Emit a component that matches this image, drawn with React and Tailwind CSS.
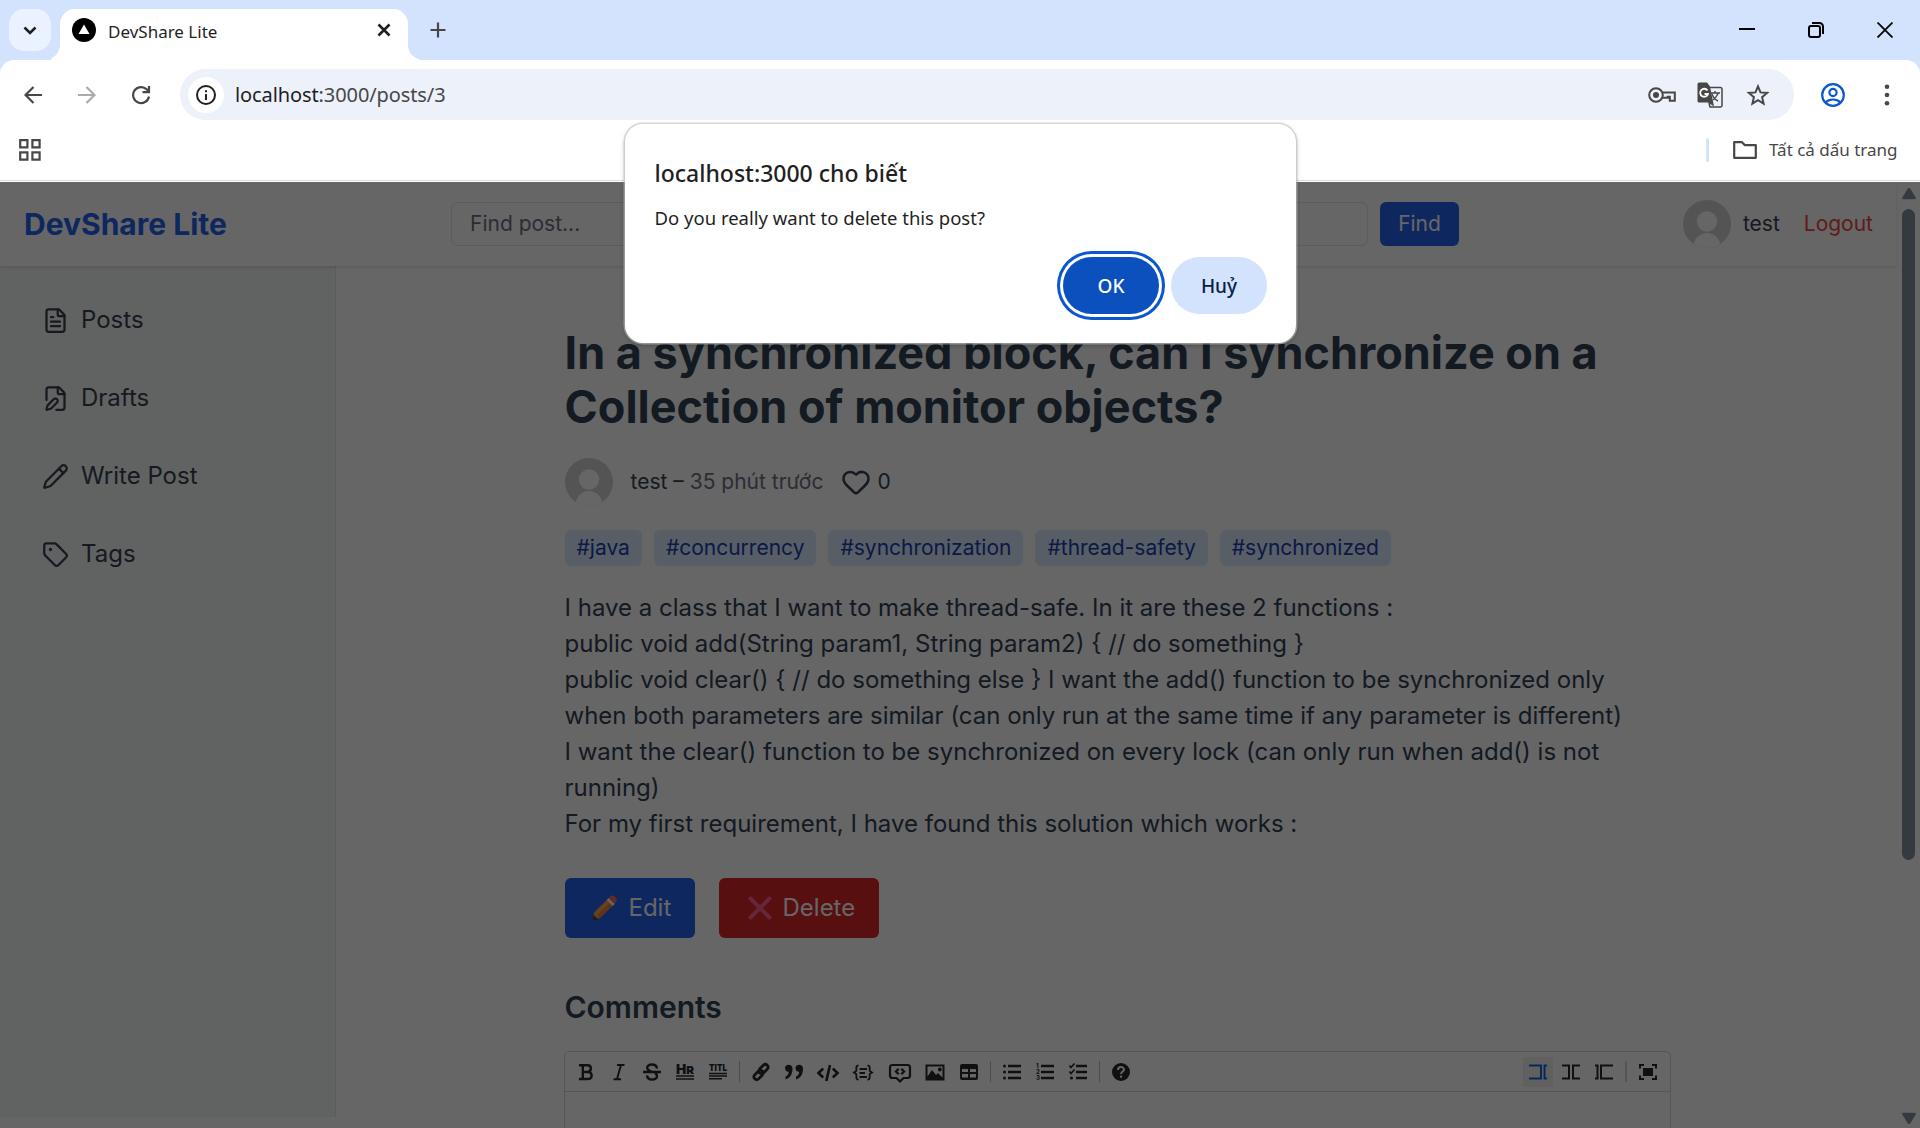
import React from "react";
import { FileText, FilePen, Pencil, Tag, Heart } from "lucide-react";

const SEG = "font-['Noto_Sans',sans-serif]";

function Avatar({ className }) {
  return (
    <svg viewBox="0 0 48 48" className={className}>
      <defs>
        <clipPath id="face"><circle cx="24" cy="24" r="24" /></clipPath>
      </defs>
      <g clipPath="url(#face)">
        <rect width="48" height="48" fill="#d1d1d1" />
        <circle cx="24" cy="21.500" r="10.200" fill="#fff" />
        <ellipse cx="24" cy="47" rx="13.500" ry="14" fill="#fff" />
      </g>
    </svg>
  );
}

function TabStrip() {
  return (
    <div className="flex h-[60px] items-start bg-[#d3e3fd] pt-[9px]">
      <div className="ml-[9px] flex h-[42px] w-[42px] items-center justify-center rounded-[15px] bg-[#ebf2ff]">
        <svg width="14" height="9" viewBox="0 0 14 9" fill="none" stroke="#1f1f1f" strokeWidth="2.600"><path d="M1.500 1.500 7 7l5.500-5.500" /></svg>
      </div>
      <svg className="mt-[36px] h-[15px] w-[9px]" viewBox="0 0 9 15" fill="#fff"><path d="M9 0v15H-6C2 15 9 8 9 0Z" /></svg>
      <div className="flex h-[51px] w-[348px] items-center rounded-t-[15px] bg-white pr-[17px] pl-3">
        <svg width="24" height="24" viewBox="0 0 24 24" className="-mt-[9px]"><circle cx="12" cy="12" r="12" fill="#000" /><path d="M12 6.500 17.500 16h-11Z" fill="#fff" /></svg>
        <span className="ml-3 -mt-[5px] w-[130px] text-[17px] leading-6 whitespace-nowrap text-[#1f1f1f]">DevShare Lite</span>
        <svg width="14" height="14" viewBox="0 0 14 14" className="-mt-[9px] ml-auto" stroke="#1f1f1f" strokeWidth="2.600"><path d="m1.500 1.500 11 11m0-11-11 11" /></svg>
      </div>
      <svg className="mt-[36px] h-[15px] w-[15px]" viewBox="0 0 15 15" fill="#fff"><path d="M0 0v15h15C7 15 0 8 0 0Z" /></svg>
      <svg width="16" height="16" viewBox="0 0 16 16" className="mt-[13px] ml-[7px]" stroke="#474747" strokeWidth="2.200"><path d="M8 .5v15M.5 8h15" /></svg>
      <div className="mt-[13px] mr-[27px] ml-auto flex items-center gap-[53px]">
        <svg width="16" height="16" viewBox="0 0 16 16" stroke="#000" strokeWidth="2"><path d="M0 7h16" /></svg>
        <svg width="16" height="16" viewBox="0 0 16 16" fill="none" stroke="#000" strokeWidth="2"><rect x="1" y="4" width="11" height="11" rx="2" /><path d="M4 1h7.500A3.500 3.500 0 0 1 15 4.500V12" /></svg>
        <svg width="16" height="16" viewBox="0 0 16 16" stroke="#000" strokeWidth="1.800"><path d="m.5.500 15 15m0-15-15 15" /></svg>
      </div>
    </div>
  );
}

function Toolbar() {
  return (
    <div className="bg-[#d3e3fd]">
      <div className="flex h-[69px] items-center rounded-t-[14px] bg-white">
        <svg width="18" height="18" viewBox="0 0 18 18" className="ml-6" fill="none" stroke="#474747" strokeWidth="2.200"><path d="M9.500 1 1.500 9l8 8M1.500 9H18" /></svg>
        <svg width="18" height="18" viewBox="0 0 18 18" className="ml-9" fill="none" stroke="#ababab" strokeWidth="2.200"><path d="m8.500 1 8 8-8 8M16.500 9H0" /></svg>
        <svg width="20" height="20" viewBox="0 0 20 20" className="ml-[35px]" fill="none" stroke="#474747" strokeWidth="2.200"><path d="M18 11.500A8 8 0 1 1 15.700 4.300L18 6.700M18 1v6.200h-6.500" /></svg>
        <div className="ml-[29px] flex h-[51px] w-[1614px] items-center rounded-full bg-[#edf1fa] pr-[23px] pl-2">
          <div className="flex h-9 w-9 items-center justify-center rounded-full bg-white">
            <svg width="20" height="20" viewBox="0 0 20 20" fill="none" stroke="#1f1f1f" strokeWidth="2"><circle cx="10" cy="10" r="9" /><path d="M10 9v6M10 5.200v2" /></svg>
          </div>
          <span className="ml-[11px] text-[20px] tracking-[-0.1px] text-[#1f1f1f]">localhost<span className="text-[#474747]">:3000/posts/3</span></span>
          <svg width="28" height="18" viewBox="0 0 28 18" className="ml-auto" fill="none" stroke="#474747" strokeWidth="2"><circle cx="8" cy="9" r="6.800" /><circle cx="8" cy="9" r="3" fill="#474747" stroke="none" /><path d="M14 6.500h12.800v8.300h-5v-4h-2v1H14" /></svg>
          <svg width="26" height="26" viewBox="0 0 26 26" className="ml-[21px]"><path d="M2 .5h8l3 4 4 20-6-4H2a1.500 1.500 0 0 1-1.500-1.500V2A1.500 1.500 0 0 1 2 .5Z" fill="#474747" /><path d="M12 5.500h11.500a1.500 1.500 0 0 1 1.500 1.500v16.500a1.500 1.500 0 0 1-1.500 1.500H13l-1-4" fill="none" stroke="#474747" strokeWidth="1.500" /><path d="M10.500 8.500A4 4 0 1 0 11 12H7.500" fill="none" stroke="#fff" strokeWidth="1.800" /><path d="M14 11h9m-5-2v2m3 0c-.5 3-3 5-5 7m-1-6c1 3 4 6 6 7" fill="none" stroke="#474747" strokeWidth="1.400" /></svg>
          <svg width="24" height="24" viewBox="0 0 24 24" className="mr-px ml-[23px]" fill="none" stroke="#474747" strokeWidth="2"><path d="m12 3.400 2.500 6 6.600.5-5 4.300 1.500 6.400-5.600-3.400-5.600 3.400 1.500-6.400-5-4.300 6.600-.5Z" /></svg>
        </div>
        <svg width="24" height="24" viewBox="0 0 24 24" className="ml-[27px]" fill="none" stroke="#0b57d0" strokeWidth="2.200"><circle cx="12" cy="12" r="10.800" /><circle cx="12" cy="9.500" r="3.600" /><path d="M4.500 19.500c4-4 11-4 15 0" /></svg>
        <svg width="6" height="22" viewBox="0 0 6 22" className="ml-[39px]" fill="#474747"><circle cx="3" cy="2.700" r="2.300" /><circle cx="3" cy="11" r="2.300" /><circle cx="3" cy="19.300" r="2.300" /></svg>
      </div>
    </div>
  );
}

function BookmarkBar() {
  return (
    <div className="h-[53px] shrink-0 bg-white">
      <div className="flex h-[52px] items-center border-b border-[#dcdcdc] pr-[22px] pb-[9px] pl-[19px]">
        <svg width="22" height="22" viewBox="0 0 22 22" fill="none" stroke="#474747" strokeWidth="2.200"><path d="M1.200 1.200h7.200v7.200H1.200ZM13.400 1.200h7.200v7.200h-7.200ZM1.200 13.400h7.200v7.200H1.200ZM13.400 13.400h7.200v7.200h-7.200Z" /></svg>
        <div className="ml-auto h-6 w-[3px] rounded-full bg-[#d3e3fd]" />
        <svg width="24" height="18" viewBox="0 0 24 18" className="ml-6" fill="none" stroke="#474747" strokeWidth="2.200" strokeLinejoin="round"><path d="M1.200 1.200h7.800l2.700 2.900h11.100v12.700H1.200Z" /></svg>
        <span className="ml-3 w-[129px] text-[17px] whitespace-nowrap text-[#474747]">Tất cả dấu trang</span>
      </div>
    </div>
  );
}

function Header() {
  return (
    <header className="relative z-10 flex h-[84px] w-[1896px] items-center bg-white pr-[23px] pl-6 shadow-[0_1.5px_3px_rgba(0,0,0,0.12)]">
      <div className="w-[427px] text-[30px] leading-9 font-bold text-[#2563eb]">DevShare Lite</div>
      <div className="flex h-11 w-[917px] items-center rounded-[6px] border border-gray-200 px-[18px] text-[21px] text-gray-500">Find post...</div>
      <div className="ml-3 flex h-11 w-[79px] items-center justify-center rounded-[6px] bg-[#2563eb] text-[21px] text-white">Find</div>
      <Avatar className="ml-auto h-12 w-12" />
      <span className="ml-3 text-[21px] text-[#374151]">test</span>
      <span className="ml-6 text-[21px] text-[#ef4444]">Logout</span>
    </header>
  );
}

const NAV = [[FileText, "Posts"], [FilePen, "Drafts"], [Pencil, "Write Post"], [Tag, "Tags"]];

function Sidebar() {
  return (
    <aside className="h-[851px] w-[336px] border-r border-gray-200 bg-[#f0f8f4] pt-[28px] pl-[42px]">
      {NAV.map(([Icon, label]) => (
        <div key={label} className="mb-[26px] flex h-[52px] items-center gap-3 text-[24px] text-[#374151]">
          <Icon size={27} strokeWidth={2} />
          {label}
        </div>
      ))}
    </aside>
  );
}

const TAGS = ["java", "concurrency", "synchronization", "thread-safety", "synchronized"];

const LINES = [
  "I have a class that I want to make thread-safe. In it are these 2 functions :",
  "public void add(String param1, String param2) { // do something }",
  "public void clear() { // do something else } I want the add() function to be synchronized only",
  "when both parameters are similar (can only run at the same time if any parameter is different)",
  "I want the clear() function to be synchronized on every lock (can only run when add() is not",
  "running)",
  "For my first requirement, I have found this solution which works :",
];

function PencilEmoji() {
  return (
    <svg width="26" height="26" viewBox="0 0 26 26">
      <path d="M2 17.500 15.500 4.500l5.500 5.500L8 23l-6.500 1.500Z" fill="#ffa347" />
      <path d="M5 20.500 18.300 7.300 21 10 8 23Z" fill="#e8823a" />
      <path d="m14.700 5 2.300-2.300 6 6L20.700 11Z" fill="#fff" />
      <path d="m16.500 3.200 2-1.900c1.500-1.300 3-1 4.500.5l.7.700c1.300 1.300 1.500 3 .2 4.300L22 8.700Z" fill="#ff6a5c" />
      <path d="m1.600 20-.9 4.300c0 .7.400 1 1 .9L6 24Z" fill="#5a3b3f" />
    </svg>
  );
}

const TOOLS = [
  ["bold", 33, <g fill="none" stroke="currentColor" strokeWidth="2.400"><path d="M2 2.300h8.500c4.500 0 4.500 6.500 0 6.700H5.800M10.500 9c5.500 0 5.500 7 0 7H2M5.800 2v14" /></g>],
  ["italic", 33, <g fill="none" stroke="currentColor" strokeWidth="1.900"><path d="M7 2h7.500M3.500 16.200H11M11 2 7 16" /></g>],
  ["strike", 33, <g fill="none" stroke="currentColor" strokeWidth="2.400"><path d="M0 9h18M14 5.500c-.5-5.500-9.800-5-9.800-.8 0 2.300 2 3.200 4.800 4.100M4 12.300c.5 5.700 10 5.200 10 .9 0-1.500-.6-2.500-2-3.300" /></g>],
  ["hr", 33, <g><text x="0" y="10.500" textLength="18" lengthAdjust="spacingAndGlyphs" className="text-[13px] font-black" fill="currentColor">H<tspan fontSize="11">R</tspan></text><path d="M0 13h18M0 16h18" stroke="currentColor" strokeWidth="1.600" /></g>],
  ["title", 33, <g><text x="0" y="8" textLength="18" lengthAdjust="spacingAndGlyphs" className="text-[9px] font-black" fill="currentColor">TITL</text><path d="M0 10.500h18M0 13h18M0 15.700h13" stroke="currentColor" strokeWidth="1.600" /></g>],
  "sep",
  ["link", 33, <g fill="none" stroke="currentColor" strokeWidth="2.800" strokeLinecap="round"><path d="m7.700 5.700 3.600-3.500c2.800-2.400 6.300 1 4 4L12 9.600c-1.800 1.600-4 1.200-5.200-.6M10.300 12.300l-3.600 3.500c-2.800 2.400-6.300-1-4-4L6 8.400c1.800-1.600 4-1.200 5.200.6" /></g>],
  ["quote", 33, <g fill="currentColor"><path d="M0 4.500C0 1 7.500 0 7.500 5.500c0 6-2.500 9.500-7 11v-3c2-.8 3.200-2.500 3.200-4.700C1.500 9 0 7.300 0 4.500ZM10.500 4.500C10.500 1 18 0 18 5.500c0 6-2.500 9.500-7 11v-3c2-.8 3.200-2.500 3.200-4.700-2.200.2-3.700-1.500-3.700-4.300Z" /></g>],
  ["code", 35, <g fill="none" stroke="currentColor" strokeWidth="2.600"><path d="M4.200 5.500-.5 10l4.700 4.500M13.800 5.500l4.700 4.500-4.700 4.500M11 2 7.300 18" /></g>],
  ["block", 36, <g fill="none" stroke="currentColor" strokeWidth="1.800"><path d="M4.500 2.500C1 2.500 3 6 2.200 8L0 9.500 2.200 11c.8 2-1.200 5.700 2.300 5.700M13.500 2.500c3.500 0 1.500 3.500 2.300 5.500L18 9.500 15.800 11c-.8 2 1.200 5.700-2.300 5.700M5.500 6H13M5.500 10H11M5.500 14H13" /></g>],
  ["comment", 37, <g fill="none" stroke="currentColor" strokeWidth="2.200"><path d="M1.500 2h15q2.500 0 2.500 2.500v8q0 2.500-2.500 2.500h-4L9 18.500 5.500 15h-4Q-1 15-1 12.500v-8Q-1 2 1.500 2ZM7.700 5.700 4.900 8.500l2.800 2.800M10.300 5.700l2.800 2.800-2.800 2.800" /></g>],
  ["image", 34, <g><path fillRule="evenodd" d="M-.5 1.500h19v16h-19ZM1.500 3.500v10L6 7l4 5 2-2 4.500 4.500v-11Z" fill="currentColor" /><circle cx="13.800" cy="6.500" r="1.900" fill="currentColor" /></g>],
  ["table", 33, <g fill="currentColor"><path fillRule="evenodd" d="M2 1h14q2 0 2 2v12q0 2-2 2H2q-2 0-2-2V3q0-2 2-2ZM2 6v3h6V6Zm8 0v3h6V6Zm-8 5v3.500h6V11Zm8 0v3.500h6V11Z" /></g>],
  "sep",
  ["ul", 33, <g><path d="M5 3h13M5 9h13M5 15h13" stroke="currentColor" strokeWidth="2.300" /><circle cx="1.500" cy="3" r="1.500" fill="currentColor" /><circle cx="1.500" cy="9" r="1.500" fill="currentColor" /><circle cx="1.500" cy="15" r="1.500" fill="currentColor" /></g>],
  ["ol", 33, <g><path d="M5 3h13M5 9h13M5 15h13" stroke="currentColor" strokeWidth="2.300" /><g className="text-[6px] font-bold" fill="currentColor"><text x="0" y="5">1</text><text x="0" y="11">2</text><text x="0" y="17">3</text></g></g>],
  ["task", 33, <g><path d="M7 3h11M7 9h11M7 15h11" stroke="currentColor" strokeWidth="2.300" /><path d="m.5 2.500 1.500 2 3.500-4M.5 8.500l1.500 2 3.500-4" fill="none" stroke="currentColor" strokeWidth="1.700" /><circle cx="2.500" cy="15" r="1.600" fill="currentColor" /></g>],
  "sep",
  ["help", 33, <g><circle cx="9" cy="9" r="9" fill="currentColor" /><path d="M6 7c0-4 6-3.700 6-.4 0 2-2.900 2-2.900 4.400M9.100 12.500v2.200" fill="none" stroke="#fff" strokeWidth="2" /></g>],
];

const MODES = [
  ["edit", <path d="M0 2.500h12v13H0M18 2.500h-2.500v13H18" />],
  ["live", <path d="M0 2.500h7v13H0M18 2.500h-7v13h7" />],
  ["preview", <path d="M0 2.500h2.500v13H0M18 2.500H6v13h12" />],
];

function Editor() {
  return (
    <div className="mt-[26px] h-[120px] w-[1107px] -translate-x-px rounded-t-[5px] border-[1.5px] border-[#d0d7de]">
      <div className="flex h-[40px] items-center border-b border-[#d0d7de] pr-[13px] pl-[4.500px] text-[#24292f]">
        {TOOLS.map((tool, i) =>
          tool === "sep" ? (
            <div key={i} className="flex w-[10px] shrink-0 justify-center">
              <div className="h-[21px] w-px bg-[#b8c0c8]" />
            </div>
          ) : (
            <div key={tool[0]} className="flex shrink-0 justify-center" style={{ width: tool[1] }}>
              <svg width="18" height="18" viewBox="0 0 18 18" className="shrink-0 overflow-visible">{tool[2]}</svg>
            </div>
          )
        )}
        <div className="ml-auto flex items-center">
          {MODES.map(([name, path], i) => (
            <div key={name} className={i === 0 ? "mr-[3px] flex h-[30px] w-[30px] items-center justify-center rounded-[3px] bg-[#f0f1f2] text-[#0969da]" : "mr-[3px] flex h-[30px] w-[30px] items-center justify-center"}>
              <svg width="18" height="18" viewBox="0 0 18 18" fill="none" stroke="currentColor" strokeWidth="2">{path}</svg>
            </div>
          ))}
          <div className="mr-3 ml-[3px] h-[21px] w-[2px] bg-[#d0d7de]" />
          <svg width="18" height="18" viewBox="0 0 18 18" fill="none" stroke="currentColor" strokeWidth="2"><path d="M1 5.500V2h4M13 2h4v3.500M17 12.500V16h-4M5 16H1v-3.500" /><rect x="4" y="5" width="10" height="8" fill="currentColor" stroke="none" /></svg>
        </div>
      </div>
    </div>
  );
}

function Post() {
  return (
    <main className="ml-[228.500px] w-[1110px] pt-[60px] text-[#334155]">
      <h1 className="text-[45px] leading-[54px] font-bold whitespace-nowrap">
        In a synchronized block, can I synchronize on a<br />Collection of monitor objects?
      </h1>
      <div className="mt-6 flex h-12 items-center text-[21px] text-[#374151]">
        <Avatar className="mr-[18px] h-12 w-12" />
        <span>test – <span className="text-gray-500">35 phút trước</span></span>
        <Heart size={30} strokeWidth={2} className="mr-1.5 ml-[18px]" />0
      </div>
      <div className="mt-6 flex gap-3">
        {TAGS.map((t) => (
          <span key={t} className="flex h-9 items-center rounded-[6px] bg-blue-100 px-3 text-[21px] text-[#1e40af]">#{t}</span>
        ))}
      </div>
      <div className="mt-6 text-[24px] leading-9 whitespace-nowrap">
        {LINES.map((l) => <p key={l}>{l}</p>)}
      </div>
      <div className="mt-9 flex gap-6 text-[24px] text-white">
        <div className="flex h-[60px] w-[130px] items-center rounded-[6px] bg-[#2563eb] pl-[27px]"><PencilEmoji /><span className="ml-[11px]">Edit</span></div>
        <div className="flex h-[60px] w-40 items-center rounded-[6px] bg-[#dc2626] pl-[29px]">
          <svg width="24" height="24" viewBox="0 0 24 24" stroke="#ff5f92" strokeWidth="4" strokeLinecap="round"><path d="m2.500 2.500 19 19m0-19-19 19" /></svg>
          <span className="ml-[11px]">Delete</span>
        </div>
      </div>
      <h2 className="mt-[51px] text-[30px] leading-9 font-semibold">Comments</h2>
      <Editor />
    </main>
  );
}

export default function App() {
  return (
    <div className={`relative flex h-[1128px] w-[1920px] flex-col overflow-hidden bg-white ${SEG}`}>
      <TabStrip />
      <Toolbar />
      <BookmarkBar />
      <div className="relative h-[946px] shrink-0 overflow-hidden bg-white font-['Inter',sans-serif]">
        <Header />
        <div className="flex">
          <Sidebar />
          <Post />
        </div>
        <div className="absolute top-0 right-0 flex h-full w-[23px] flex-col items-center pt-1.5 pb-1">
          <svg width="14" height="12" viewBox="0 0 14 12" fill="#8692a2" className="shrink-0"><path d="M7 0q1 0 1.700 1.200l5 8.300q.7 1.800-1.200 1.800H1.500q-1.900 0-1.200-1.800l5-8.300Q6 0 7 0Z" /></svg>
          <div className="mt-[9px] h-[651px] w-[13px] rounded-full bg-[#8692a2]" />
          <svg width="14" height="12" viewBox="0 0 14 12" fill="#8692a2" className="mt-auto shrink-0 rotate-180"><path d="M7 0q1 0 1.700 1.200l5 8.300q.7 1.800-1.200 1.800H1.500q-1.900 0-1.200-1.800l5-8.300Q6 0 7 0Z" /></svg>
        </div>
        <div className="absolute inset-0 z-20 bg-black/60" />
      </div>

      <div className="absolute top-[124px] left-[625px] z-30 flex h-[219px] w-[671px] flex-col rounded-[18px] bg-white pr-[29px] pl-[29.500px] shadow-[0_0_0_1.5px_rgba(190,195,192,0.6),0_2px_5px_rgba(0,0,0,0.3)]">
        <div className="mt-[33px] w-fit text-[23px] leading-8 font-medium whitespace-nowrap text-[#1f1f1f]">localhost:3000 cho biết</div>
        <div className="mt-[17px] text-[18.500px] leading-6 whitespace-nowrap text-[#1f1f1f]">Do you really want to delete this post?</div>
        <div className="mt-[27px] flex justify-end gap-3 text-[19px] font-medium">
          <div className="flex h-[57px] w-24 items-center justify-center rounded-full bg-[#0b50bd] pt-0.5 text-white shadow-[0_0_0_3px_#fff,0_0_0_6px_#0b57d0]">OK</div>
          <div className="flex h-[57px] w-24 items-center justify-center rounded-full bg-[#d3e3fd] pt-0.5 text-[#041e49]">Huỷ</div>
        </div>
      </div>
    </div>
  );
}
